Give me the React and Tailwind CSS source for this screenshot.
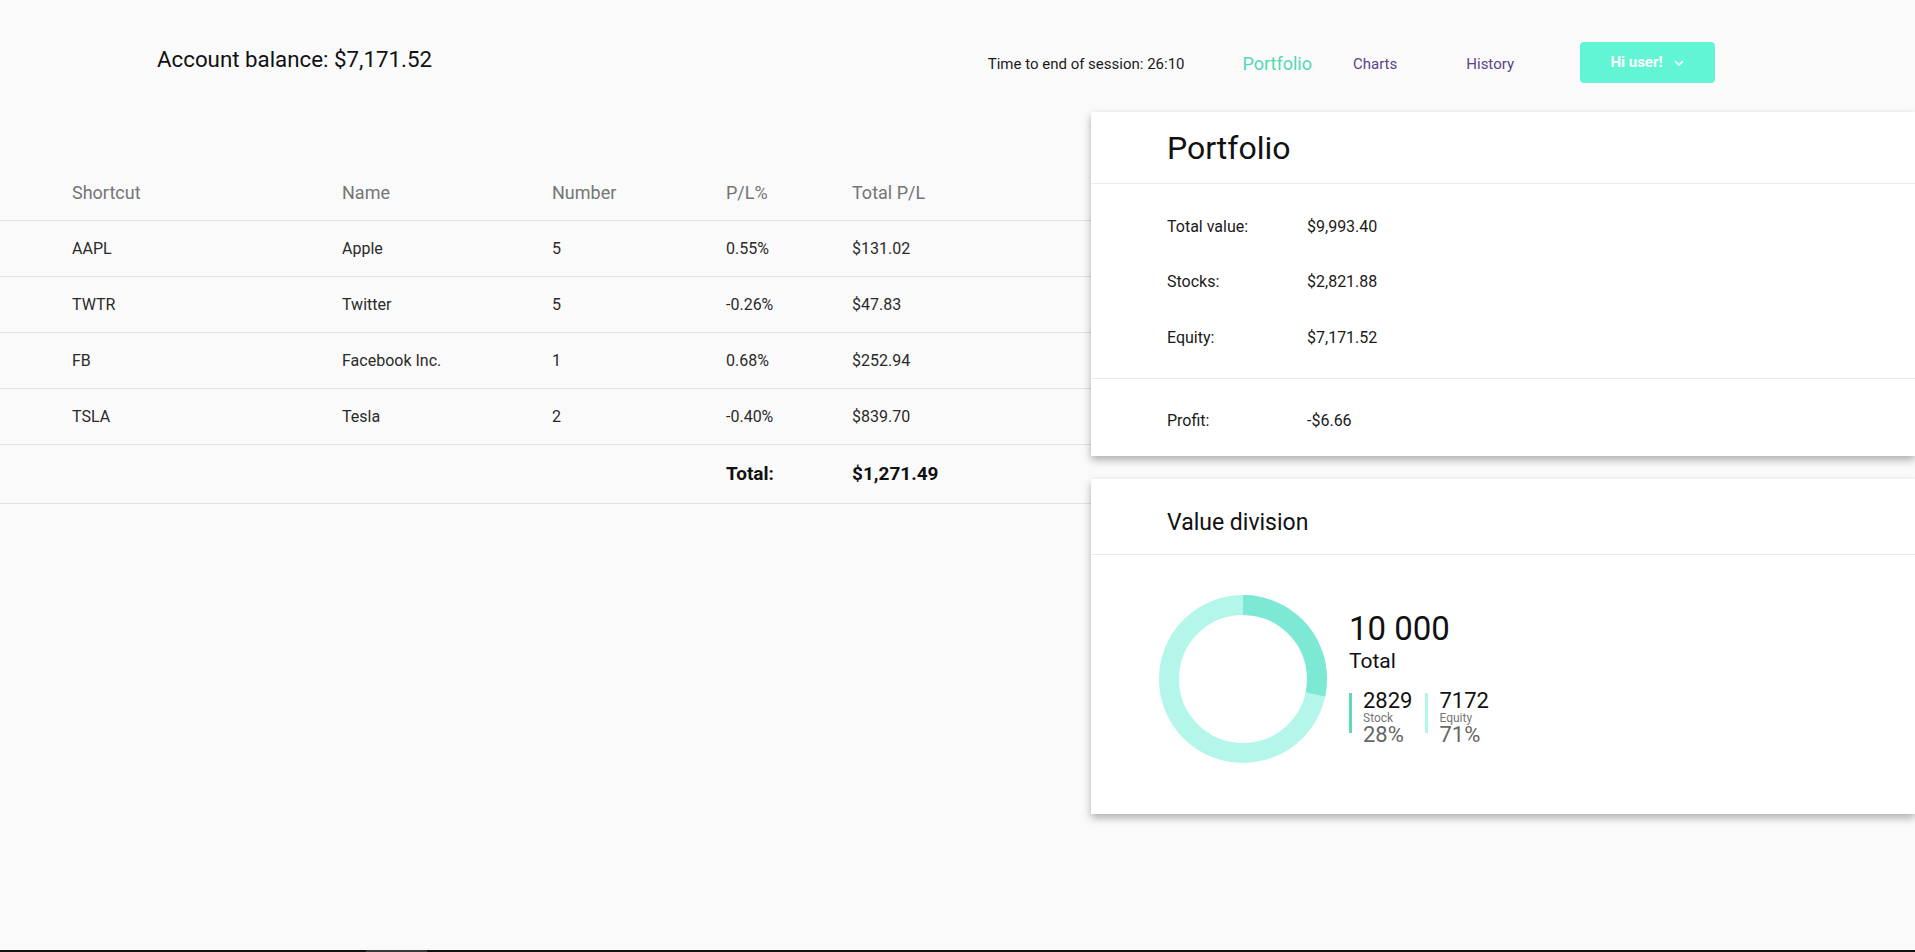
import React from 'react';

const positions = [
    { shortcut: 'AAPL', name: 'Apple', number: 5, pl: '0.55%', total: '$131.02' },
    { shortcut: 'TWTR', name: 'Twitter', number: 5, pl: '-0.26%', total: '$47.83' },
    { shortcut: 'FB', name: 'Facebook Inc.', number: 1, pl: '0.68%', total: '$252.94' },
    { shortcut: 'TSLA', name: 'Tesla', number: 2, pl: '-0.40%', total: '$839.70' },
];

const summary = [
    { label: 'Total value:', value: '$9,993.40' },
    { label: 'Stocks:', value: '$2,821.88' },
    { label: 'Equity:', value: '$7,171.52' },
];

const Donut = ({ share }) => {
    const r = 74;
    const circ = 2 * Math.PI * r;
    return (
        <svg width="168" height="168" viewBox="0 0 168 168" className="shrink-0">
            <circle cx="84" cy="84" r={r} fill="none" stroke="#b4f6ea" strokeWidth="20" />
            <circle
                cx="84"
                cy="84"
                r={r}
                fill="none"
                stroke="#7de9d4"
                strokeWidth="20"
                strokeDasharray={`${circ * share} ${circ}`}
                transform="rotate(-90 84 84)"
            />
        </svg>
    );
};

const Stat = ({ value, label, pct, bar }) => (
    <div className="flex items-stretch">
        <div className={`w-[3px] h-[40px] mt-[3px] ${bar}`}></div>
        <div className="flex flex-col pl-[11px]">
            <span className="text-[22px] leading-none text-[#111]">{value}</span>
            <span className="text-[12px] leading-none text-[#777]">{label}</span>
            <span className="text-[22px] leading-none text-[#666]">{pct}</span>
        </div>
    </div>
);

export default function App() {
    return (
        <div className="min-h-screen flex flex-col bg-[#fafafa] text-[#212121]" style={{ fontFamily: 'Roboto, "Noto Sans", sans-serif' }}>
            <div className="flex-1 flex flex-col">
                {/* top bar */}
                <header className="flex items-start h-[112px]">
                    <div className="ml-[157px] mt-[45px] text-[22.3px] leading-[28px] text-[#111]">
                        Account balance: $7,171.52
                    </div>
                    <nav className="ml-auto mr-[200px] mt-[42px] h-[41px] flex items-center">
                        <span className="mt-[4px] text-[15px] text-[#1a1a1a]">Time to end of session: 26:10</span>
                        <a className="ml-[58px] mt-[2px] text-[18px] text-[#52d9b6]">Portfolio</a>
                        <a className="ml-[41px] mt-[4px] text-[15px] text-[#5b4388]">Charts</a>
                        <a className="ml-[69px] mt-[4px] text-[15px] text-[#5b4388]">History</a>
                        <button className="ml-[66px] w-[135px] h-[41px] rounded-[4px] bg-[#61f5d6] text-white text-[15px] font-bold flex items-center justify-center gap-[10px]">
                            Hi user!
                            <svg width="12" height="12" viewBox="0 0 24 24" fill="none" stroke="white" strokeWidth="3.5" strokeLinecap="round" strokeLinejoin="round">
                                <path d="M5 9l7 7 7-7" />
                            </svg>
                        </button>
                    </nav>
                </header>

                <div className="flex flex-1">
                    {/* positions table */}
                    <div className="w-[1091px] shrink-0 pt-[52px]">
                        <div className="grid grid-cols-[270px_210px_174px_126px_1fr] pl-[72px] h-[57px] items-center border-b border-[#e0e0e0] text-[18px] text-[#757575]">
                            <span>Shortcut</span>
                            <span>Name</span>
                            <span>Number</span>
                            <span>P/L%</span>
                            <span>Total P/L</span>
                        </div>
                        {positions.map((p) => (
                            <div key={p.shortcut} className="grid grid-cols-[270px_210px_174px_126px_1fr] pl-[72px] h-[56px] items-center border-b border-[#e0e0e0] text-[16px] text-[#2a2a2a]">
                                <span>{p.shortcut}</span>
                                <span>{p.name}</span>
                                <span>{p.number}</span>
                                <span>{p.pl}</span>
                                <span>{p.total}</span>
                            </div>
                        ))}
                        <div className="grid grid-cols-[270px_210px_174px_126px_1fr] pl-[72px] h-[59px] items-center border-b border-[#e0e0e0] text-[19px] font-bold text-[#111]">
                            <span></span>
                            <span></span>
                            <span></span>
                            <span>Total:</span>
                            <span>$1,271.49</span>
                        </div>
                    </div>

                    {/* side cards */}
                    <div className="flex-1 flex flex-col gap-[23px]">
                        <section className="bg-white shadow-[0_4px_8px_rgba(0,0,0,0.3)]">
                            <div className="h-[72px] flex items-center pl-[76px] border-b border-[#ececec]">
                                <h2 className="text-[32px] leading-none text-[#111]">Portfolio</h2>
                            </div>
                            <div className="pl-[76px] pt-[15px] pb-[12px] border-b border-[#ececec]">
                                {summary.map((s) => (
                                    <div key={s.label} className="flex items-center h-[55.5px] text-[16px] text-[#1a1a1a]">
                                        <span className="w-[140px]">{s.label}</span>
                                        <span>{s.value}</span>
                                    </div>
                                ))}
                            </div>
                            <div className="pl-[76px] h-[77px] flex items-center text-[16px] text-[#1a1a1a] pt-[8px]">
                                <span className="w-[140px]">Profit:</span>
                                <span>-$6.66</span>
                            </div>
                        </section>

                        <section className="bg-white shadow-[0_4px_8px_rgba(0,0,0,0.3)]">
                            <div className="h-[76px] flex items-center pl-[76px] pt-[12px] border-b border-[#ececec]">
                                <h3 className="text-[23px] leading-none text-[#111]">Value division</h3>
                            </div>
                            <div className="h-[259px] flex items-center pl-[68px] pb-[10px] gap-[22px]">
                                <Donut share={0.2829} />
                                <div className="flex flex-col">
                                    <span className="text-[33px] leading-none text-[#111]">10 000</span>
                                    <span className="text-[21px] leading-none text-[#111] mt-[6px]">Total</span>
                                    <div className="flex gap-[13px] mt-[18px]">
                                        <Stat value="2829" label="Stock" pct="28%" bar="bg-[#5fd8bb]" />
                                        <Stat value="7172" label="Equity" pct="71%" bar="bg-[#b4f6ea]" />
                                    </div>
                                </div>
                            </div>
                        </section>
                    </div>
                </div>
            </div>
            <div className="h-[2px] bg-[#111] flex">
                <div className="ml-[366px] w-[61px] bg-[#3a3a3a]"></div>
            </div>
        </div>
    );
}
